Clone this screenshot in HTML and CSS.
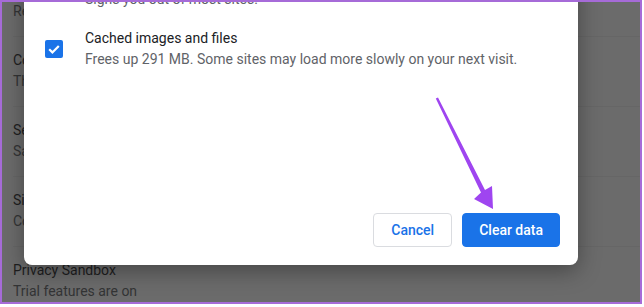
FILE: index.html
```html
<!DOCTYPE html>
<html lang="en">
<head>
    <meta charset="UTF-8">
    <meta name="viewport" content="width=device-width, initial-scale=1.0">
    <title>Clear browsing data</title>
    <link rel="stylesheet" href="styles.css">
</head>
<body>
    <div class="frame">
        <div class="settings">
            <div class="item">
                <div class="item-title">Reset settings</div>
                <div class="item-sub">Restore settings to their original defaults</div>
            </div>
            <div class="item">
                <div class="item-title">Cookies and other site data</div>
                <div class="item-sub">Third-party cookies are blocked in Incognito mode</div>
            </div>
            <div class="item">
                <div class="item-title">Security</div>
                <div class="item-sub">Safe Browsing (protection from dangerous sites) and other security settings</div>
            </div>
            <div class="item">
                <div class="item-title">Site settings</div>
                <div class="item-sub">Controls what information sites can use and show</div>
            </div>
            <div class="item">
                <div class="item-title">Privacy Sandbox</div>
                <div class="item-sub">Trial features are on</div>
            </div>
        </div>

        <div class="dialog">
            <p class="clipped">Signs you out of most sites.</p>
            <div class="option">
                <span class="checkbox">
                    <svg viewBox="0 0 18 18" width="18" height="18">
                        <path d="M4.2 9.3 L7.4 12.4 L13.8 5.9" fill="none" stroke="#fff" stroke-width="2.2"/>
                    </svg>
                </span>
                <div>
                    <div class="option-title">Cached images and files</div>
                    <div class="option-sub">Frees up 291 MB. Some sites may load more slowly on your next visit.</div>
                </div>
            </div>
            <div class="actions">
                <button class="btn btn-cancel">Cancel</button>
                <button class="btn btn-primary">Clear data</button>
            </div>
        </div>

        <svg class="arrow" viewBox="0 0 72 125" width="72" height="125">
            <polygon points="8,5.4 55,98 62,94 63,117 44,107 51,100.5 5.8,6.6" fill="#9f45f0"/>
        </svg>
    </div>
</body>
</html>
```

FILE: styles.css
```css
body {
    margin: 0;
    background: #fff;
    font-family: Roboto, "Liberation Sans", sans-serif;
    font-size: 14px;
}
.frame {
    position: relative;
    width: 638px;
    height: 300px;
    border: 2px solid #a66bd8;
    overflow: hidden;
    background: #6b6b6b;
}
.settings {
    margin-top: -36px;
    padding-left: 11px;
}
.item {
    padding: 14px 0;
    border-bottom: 1px solid #666;
    margin-bottom: -1px;
}
.item-title {
    line-height: 20px;
    color: #1e1e1f;
}
.item-sub {
    line-height: 22px;
    color: #333435;
}
.dialog {
    position: absolute;
    left: 22px;
    top: -30px;
    width: 554px;
    height: 293px;
    box-sizing: border-box;
    padding: 17px 18px 18px 21px;
    background: #fff;
    border-radius: 8px;
    box-shadow: 0 6px 22px rgba(0, 0, 0, 0.35);
    display: flex;
    flex-direction: column;
}
.clipped {
    margin: 0;
    padding-left: 40px;
    line-height: 20px;
    color: #5f6368;
}
.option {
    margin-top: 19px;
    display: flex;
    align-items: center;
    gap: 22px;
}
.checkbox {
    width: 18px;
    height: 18px;
    border-radius: 2px;
    background: #1a73e8;
    display: flex;
}
.option-title {
    line-height: 20px;
    color: #202124;
}
.option-sub {
    line-height: 22px;
    color: #5f6368;
}
.actions {
    margin-top: auto;
    display: flex;
    justify-content: flex-end;
    gap: 10px;
}
.btn {
    height: 34px;
    border-radius: 4px;
    font-family: Roboto, "Liberation Sans", sans-serif;
    font-size: 14px;
    font-weight: 500;
}
.btn-cancel {
    padding: 0 17px;
    background: #fff;
    border: 1px solid #dadce0;
    color: #1a73e8;
}
.btn-primary {
    padding: 0 16px;
    background: #1a73e8;
    border: 1px solid #1a73e8;
    color: #fff;
}
.arrow {
    position: absolute;
    left: 428px;
    top: 90px;
}
```
